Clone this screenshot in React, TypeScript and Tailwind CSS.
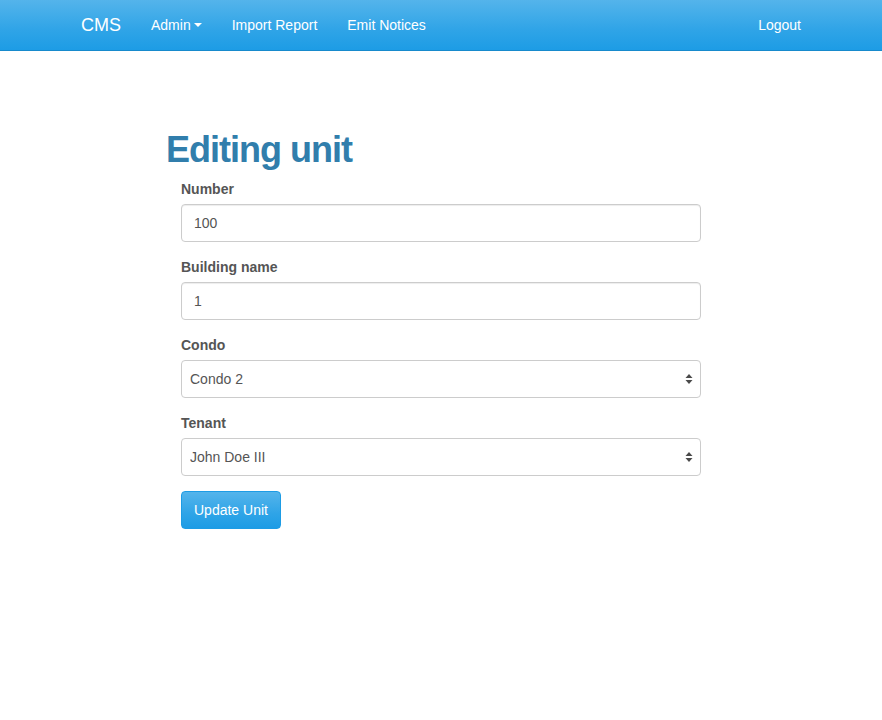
import React from 'react';

const font = { fontFamily: '"Liberation Sans", Arial, sans-serif' };

function SelectArrows() {
  return (
    <svg width="8" height="12" viewBox="0 0 8 12" className="pointer-events-none absolute right-[8px] top-1/2 -translate-y-1/2">
      <path d="M4 1 L7.5 5 L0.5 5 Z" fill="#4a4a4a" />
      <path d="M4 11 L7.5 7 L0.5 7 Z" fill="#4a4a4a" />
    </svg>
  );
}

function Field({ label, children }: { label: string; children: React.ReactNode }) {
  return (
    <div className="mb-[15px]">
      <label className="mb-[5px] block text-[14px] leading-[20px] font-bold text-[#555555]">{label}</label>
      {children}
    </div>
  );
}

export default function App() {
  return (
    <div className="min-h-[720px] bg-white text-[14px] leading-[20px] text-[#555555]" style={font}>
      {/* Navbar */}
      <nav className="h-[51px] border-b border-[#178acc] bg-[linear-gradient(#54b4eb,#2fa4e7_60%,#1d9ce5)]">
        <div className="mx-auto flex h-[50px] w-[750px] items-center justify-between">
          <div className="flex items-center">
            <a className="px-[15px] text-[18px] leading-[20px] text-white">CMS</a>
            <a className="flex items-center px-[15px] text-white">
              Admin
              <span className="ml-[3px] inline-block h-0 w-0 border-x-[4px] border-t-[4px] border-x-transparent border-t-white" />
            </a>
            <a className="px-[15px] text-white">Import Report</a>
            <a className="px-[15px] text-white">Emit Notices</a>
          </div>
          <a className="px-[15px] text-white">Logout</a>
        </div>
      </nav>

      {/* Content */}
      <div className="mx-auto w-[550px] pt-[79px]">
        <h1 className="mb-[9px] text-[36px] leading-[40px] font-bold tracking-[-1px] text-[#317eac]">Editing unit</h1>
        <form className="px-[15px]">
          <Field label="Number">
            <input
              defaultValue="100"
              className="block h-[38px] w-full rounded-[4px] border border-[#cccccc] px-[12px] text-[14px] text-[#555555] shadow-[inset_0_1px_1px_rgba(0,0,0,0.075)] outline-none"
            />
          </Field>
          <Field label="Building name">
            <input
              defaultValue="1"
              className="block h-[38px] w-full rounded-[4px] border border-[#cccccc] px-[12px] text-[14px] text-[#555555] shadow-[inset_0_1px_1px_rgba(0,0,0,0.075)] outline-none"
            />
          </Field>
          <Field label="Condo">
            <div className="relative">
              <select
                defaultValue="2"
                className="block h-[38px] w-full appearance-none rounded-[4px] border border-[#cccccc] bg-white pl-[8px] text-[14px] text-[#555555] outline-none"
              >
                <option value="1">Condo 1</option>
                <option value="2">Condo 2</option>
              </select>
              <SelectArrows />
            </div>
          </Field>
          <Field label="Tenant">
            <div className="relative">
              <select
                defaultValue="3"
                className="block h-[38px] w-full appearance-none rounded-[4px] border border-[#cccccc] bg-white pl-[8px] text-[14px] text-[#555555] outline-none"
              >
                <option value="1">John Doe</option>
                <option value="3">John Doe III</option>
              </select>
              <SelectArrows />
            </div>
          </Field>
          <button
            type="button"
            className="h-[38px] rounded-[4px] border border-[#1d9ce5] bg-[linear-gradient(#54b4eb,#2fa4e7_60%,#1d9ce5)] px-[12px] text-[14px] text-white"
          >
            Update Unit
          </button>
        </form>
      </div>
    </div>
  );
}
